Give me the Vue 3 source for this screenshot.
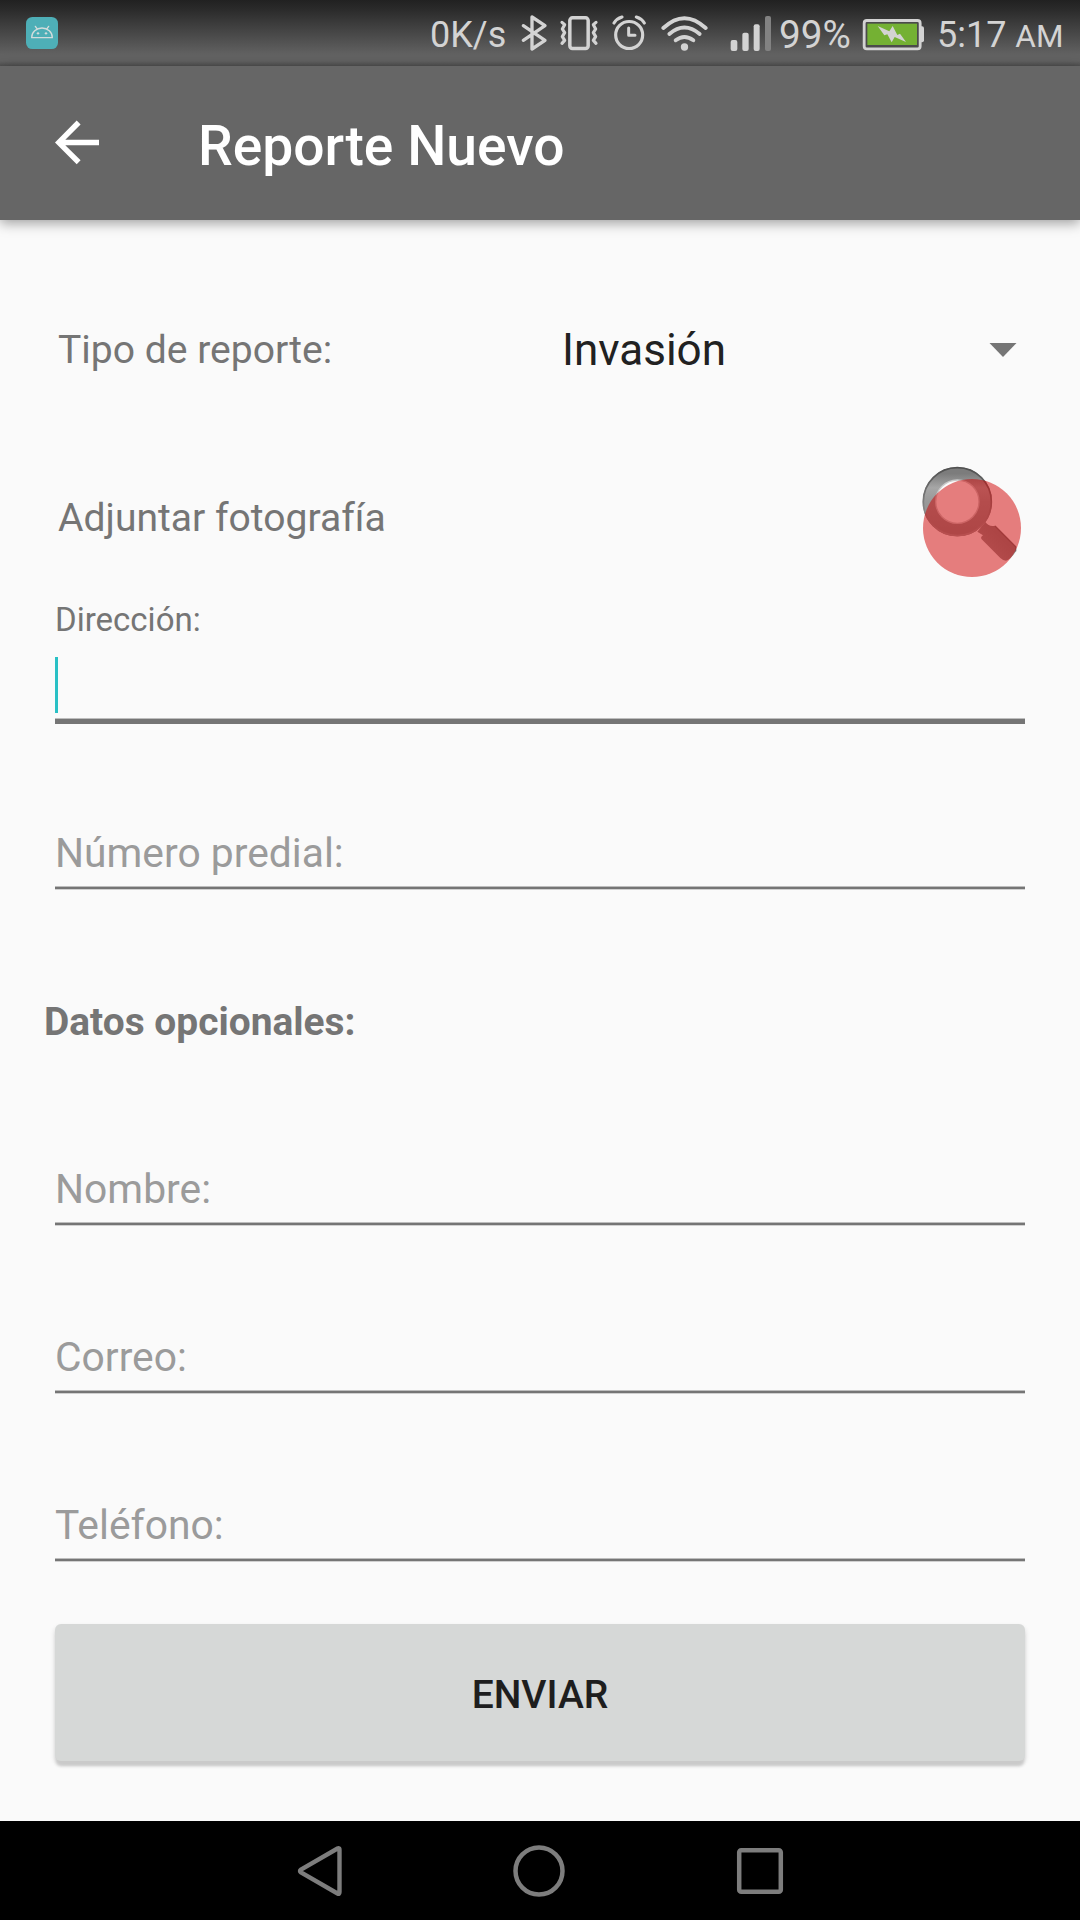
<script setup>
const optionalFields = ['Nombre:', 'Correo:', 'Teléfono:']
</script>

<template>
  <div class="screen">
    <header class="status">
      <svg class="app-badge" width="32" height="32" viewBox="0 0 96 96">
        <rect width="96" height="96" rx="19" fill="#4eafb7" />
        <g fill="none" stroke="#d3dcdc" stroke-width="4" stroke-linecap="round" stroke-linejoin="round">
          <path d="M17 62a31 29 0 0 1 62 0z" />
          <path d="M33 35l-5-7M63 35l5-7" />
        </g>
        <circle cx="36" cy="49" r="3.6" fill="#d3dcdc" />
        <circle cx="60" cy="49" r="3.6" fill="#d3dcdc" />
      </svg>
      <span class="net">0K/s</span>
      <svg class="bt" width="30" height="40" viewBox="300 39 90 120">
        <path d="M310 77L375 121L336 147V51L375 77L310 121" fill="none" stroke="#d3d3d3" stroke-width="10" stroke-linecap="round" stroke-linejoin="round" />
      </svg>
      <svg class="vib" width="42" height="40" viewBox="414 39 126 120">
        <g fill="none" stroke="#d3d3d3" stroke-linecap="round" stroke-linejoin="round">
          <rect x="449.500" y="53.500" width="55" height="92" rx="8" stroke-width="10.500" />
          <path d="M426 67L434 74L427 87L434 98L427 110L434 121L426 130M528 67L520 74L527 87L520 98L527 110L520 121L528 130" stroke-width="9.500" />
        </g>
      </svg>
      <svg class="alarm" width="38" height="40" viewBox="570 39 114 120">
        <g fill="none" stroke="#d3d3d3" stroke-linecap="round" stroke-linejoin="round">
          <circle cx="627.500" cy="105" r="40.500" stroke-width="9.500" />
          <path d="M626 84v22h19" stroke-width="9" />
          <path d="M582 69q8-13 24-18M673 69q-8-13-24-18" stroke-width="9.500" />
        </g>
      </svg>
      <svg class="wifi" width="50" height="40" viewBox="720 39 150 120">
        <g fill="none" stroke="#d3d3d3" stroke-width="11.500" stroke-linecap="round">
          <path d="M730 84q63-59 127 0" />
          <path d="M748 102q45-39 91 0" />
          <path d="M767 121q26-20 53 0" />
        </g>
        <circle cx="793.500" cy="141" r="11" fill="#d3d3d3" />
      </svg>
      <svg class="signal" width="46" height="40" viewBox="24 39 138 120">
        <g fill="#d3d3d3">
          <rect x="32" y="120" width="20" height="33" rx="6" />
          <rect x="67" y="98" width="19" height="55" rx="6" />
          <rect x="101" y="73" width="18" height="80" rx="6" />
          <rect x="135" y="48" width="18" height="105" rx="6" fill="#828282" />
        </g>
      </svg>
      <span class="pct">99%</span>
      <svg class="battery" width="66" height="40" viewBox="420 39 198 120">
        <path d="M600 79h6q6 0 6 6v36q0 6-6 6h-6z" fill="#d3d3d3" />
        <rect x="432.500" y="61.500" width="168" height="85" rx="8" fill="#4b4b4b" stroke="#d3d3d3" stroke-width="8.500" />
        <rect x="442" y="71" width="149" height="64" fill="#74b133" />
        <path d="M473 78L508 94L518 78L532 105L540 101L558 126L524 111L515 127L502 103L493 106Z" fill="#d3d3d3" />
      </svg>
      <span class="clock">5:17 <small>AM</small></span>
    </header>

    <nav class="toolbar">
      <svg class="back" width="48" height="48" viewBox="0 0 48 48">
        <path d="M47 20.700V26.300H13.300L28.600 41.300L24.700 45.300L3 23.500L24.700 1.500L28.600 5.600L13.300 20.700Z" fill="#fff" />
      </svg>
      <h1>Reporte Nuevo</h1>
    </nav>

    <main>
      <section class="type-row">
        <label>Tipo de reporte:</label>
        <div class="select">
          <span>Invasión</span>
          <svg width="28" height="14" viewBox="0 0 28 14"><path d="M.5 0H27.500L14 14Z" fill="#757575" /></svg>
        </div>
      </section>

      <section class="photo-row">
        <label>Adjuntar fotografía</label>
        <svg width="140" height="140" viewBox="0 0 420 420">
          <defs>
            <linearGradient id="rim" x1="0" y1="0" x2="0" y2="1">
              <stop offset="0" stop-color="#7c7c7c" />
              <stop offset=".25" stop-color="#a6a6a6" />
              <stop offset=".5" stop-color="#999" />
              <stop offset="1" stop-color="#8e8e8e" />
            </linearGradient>
            <linearGradient id="grip" x1="0" y1="1" x2="1" y2="0">
              <stop offset="0" stop-color="#a2a2a2" />
              <stop offset=".5" stop-color="#8e8e8e" />
              <stop offset="1" stop-color="#808080" />
            </linearGradient>
            <linearGradient id="edge" x1="0" y1="0" x2="0" y2="1">
              <stop offset="0" stop-color="#505050" />
              <stop offset=".6" stop-color="#858585" />
              <stop offset="1" stop-color="#a0a0a0" />
            </linearGradient>
          </defs>
          <path d="M232 245L256 216Q268 232 285 227L348 290V304Q331 330 318 332Q309 332 301 324L245 268Q240 262 249 256Z" fill="url(#grip)" />
          <path d="M285 228L347 290V304" fill="none" stroke="#747474" stroke-width="4" />
          <circle cx="172" cy="155" r="84" fill="none" stroke="url(#rim)" stroke-width="40" />
          <circle cx="172" cy="155" r="102" fill="none" stroke="url(#edge)" stroke-width="5" />
          <circle cx="172" cy="155" r="65" fill="#fafafa" stroke="#c9c9c9" stroke-width="4" />
          <circle cx="216" cy="234" r="147" fill="#d00000" fill-opacity=".5" />
        </svg>
      </section>

      <section class="field active">
        <label>Dirección:</label>
        <i class="caret"></i>
      </section>
      <section class="field predial"><label>Número predial:</label></section>
      <h2>Datos opcionales:</h2>
      <section v-for="f in optionalFields" :key="f" class="field"><label>{{ f }}</label></section>
      <button type="button">ENVIAR</button>
    </main>

    <footer>
      <svg width="50" height="56" viewBox="0 0 50 56"><path d="M44 5.500Q44.500 5.500 44.500 7V49Q44.500 51.500 42.500 50.500L6 29.500Q4 28 6 26.500L42.500 5.500Q43.500 5 44 5.500Z" fill="none" stroke="#7d7d7d" stroke-width="4.400" /></svg>
      <svg width="56" height="56" viewBox="0 0 56 56"><circle cx="28" cy="28" r="23.500" fill="none" stroke="#7d7d7d" stroke-width="4.500" /></svg>
      <svg width="56" height="56" viewBox="0 0 56 56"><rect x="7.200" y="7.200" width="41.600" height="41.600" rx="2" fill="none" stroke="#7d7d7d" stroke-width="4.500" /></svg>
    </footer>
  </div>
</template>

<style>
body { margin: 0; background: #fafafa; }
</style>

<style scoped>
* { box-sizing: border-box; }
svg { display: block; flex: none; }
.screen {
  width: 1080px; height: 1920px; display: flex; flex-direction: column;
  background: #fafafa; color: #757575; font-family: Roboto, sans-serif; overflow: hidden;
}
.status {
  height: 66px; flex: none; display: flex; align-items: flex-start; padding: 13px 0 0 26px;
  background: linear-gradient(#212121 0, #2a2a2a 9px, #626262 55px, #626262 61px, #515151 66px);
  color: #d3d3d3; font-size: 36px; line-height: 44px; white-space: nowrap;
}
.app-badge { margin-top: 4px; }
.net { width: 90px; margin-left: 372px; }
.vib { margin-left: 8px; }
.alarm { margin-left: 10px; }
.wifi { margin-left: 12px; }
.signal { margin-left: 18px; }
.pct { width: 81px; margin-left: 5px; font-size: 38.700px; }
.clock { margin-left: 11px; }
.clock small { font-size: 31.500px; }
.toolbar {
  height: 154px; flex: none; display: flex; align-items: center; padding-left: 52px;
  background: #666; box-shadow: 0 3px 12px rgba(0, 0, 0, .38); position: relative;
}
h1 { margin: 6px 0 0 98px; font-size: 55.200px; line-height: 64px; font-weight: 500; color: #fff; }
.back { margin-top: 0; }
main { flex: 1; display: flex; flex-direction: column; padding: 50px 55px 0; }
.type-row { height: 160px; display: flex; align-items: center; padding-left: 3px; font-size: 39.100px; }
.type-row label { width: 504px; line-height: 46px; }
.select {
  flex: 1; display: flex; align-items: center; justify-content: space-between;
  padding-right: 8px; font-size: 44px; color: #212121;
}
.select svg { margin-top: -1px; }
.photo-row { height: 140px; display: flex; justify-content: space-between; padding-left: 3px; margin-right: -15px; margin-top: 20px; font-size: 39.100px; }
.photo-row label { line-height: 136px; }
.field {
  height: 168px; flex: none; display: flex; align-items: flex-end; padding-bottom: 10px;
  border-bottom: 2px solid #757575; box-shadow: inset 0 -1px #bdbdbd, 0 1px #d0d0d0;
  font-size: 40.800px; line-height: 48px; color: #9b9b9b;
}
.active {
  height: 134px; flex-direction: column; align-items: flex-start; border-bottom-width: 5px;
  box-shadow: inset 0 -1px #bdbdbd; padding: 0; font-size: 33px; line-height: 40px; color: #757575;
}
.active label { margin-top: 10px; }
.caret { width: 3px; height: 56px; margin-top: 17px; background: #29c0c5; }
.predial { height: 165px; }
h2 { height: 168px; flex: none; margin: 0 0 0 -11px; padding-top: 109px; font-size: 38.900px; line-height: 48px; font-weight: 700; }
button {
  height: 137px; flex: none; margin: 63px 0 0; border: 0; border-radius: 6px; padding: 4px 0 0;
  background: #d6d8d7; color: #1e1e1e; font: 500 39px Roboto, sans-serif;
  box-shadow: 0 6px 3px -1px #cacaca, 0 3px 5px rgba(0, 0, 0, .16);
}
footer { height: 99px; flex: none; display: flex; align-items: center; padding: 1px 0 0 294.600px; background: #000; }
footer svg:nth-child(2) { margin-left: 166.800px; }
footer svg:nth-child(3) { margin-left: 164.200px; }
</style>
